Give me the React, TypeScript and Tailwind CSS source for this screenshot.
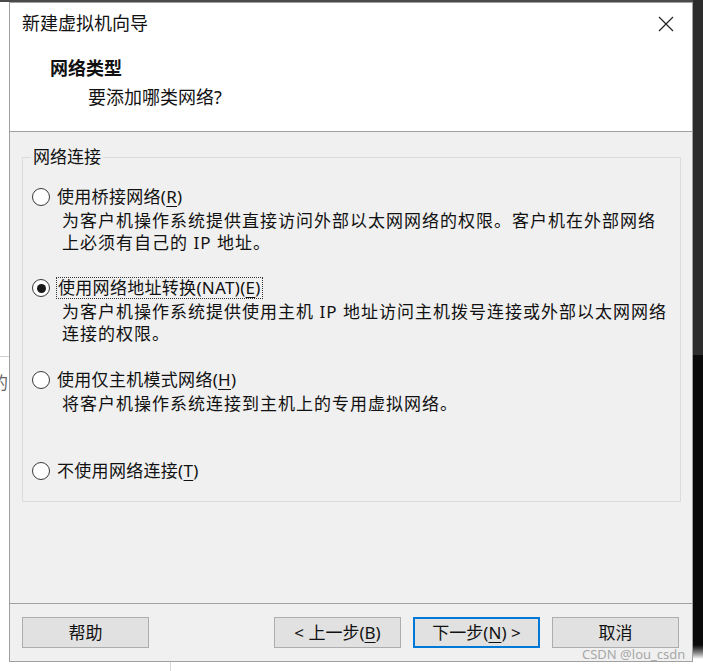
const sans = "font-['Noto_Sans','Noto_Sans_CJK_SC',sans-serif]";

function Radio({ checked }: { checked?: boolean }) {
  return (
    <span className="flex h-[18px] w-[18px] shrink-0 items-center justify-center rounded-full border-[1.5px] border-[#3a3a3a] bg-white">
      {checked ? <span className="h-[9px] w-[9px] rounded-full bg-[#1a1a1a]" /> : null}
    </span>
  );
}

function Key({ k }: { k: string }) {
  return <span className="underline underline-offset-[3px] decoration-1">{k}</span>;
}

function Option({
  label,
  desc,
  checked,
  focused,
}: {
  label: React.ReactNode;
  desc?: string[];
  checked?: boolean;
  focused?: boolean;
}) {
  return (
    <div>
      <div className="flex h-[22px] items-center pl-[9px]">
        <Radio checked={checked} />
        <span
          className={
            focused
              ? "ml-[6px] border border-dotted border-[#333333] px-[1px] text-[17px] leading-[20px] tracking-[0.3px]"
              : "ml-[7px] text-[17px] leading-[22px] tracking-[0.3px]"
          }
        >
          {label}
        </span>
      </div>
      {desc ? (
        <div className="mt-[2px] pl-[39px] text-[17px] leading-[22px] tracking-[1px] text-[#111111]">
          {desc.map((d) => (
            <div key={d}>{d}</div>
          ))}
        </div>
      ) : null}
    </div>
  );
}

function Btn({ children, primary }: { children: React.ReactNode; primary?: boolean }) {
  return (
    <div
      className={
        primary
          ? "flex h-[31px] w-[127px] items-center justify-center border-2 border-[#0078d7] bg-[#e1e1e1] text-[17px]"
          : "flex h-[31px] w-[127px] items-center justify-center border border-[#adadad] bg-[#e1e1e1] text-[17px]"
      }
    >
      {children}
    </div>
  );
}

export default function App() {
  return (
    <div className={`relative flex h-[671px] w-[703px] overflow-hidden bg-white text-[#111111] ${sans}`}>
      {/* page behind the dialog, left edge */}
      <div className="w-[9px] shrink-0 overflow-hidden">
        <div className="h-[2px] bg-[#4a4a4a]" />
        <div className="mt-[354px] h-px bg-[#d0d0d0]" />
        <div className="mt-[15px] -ml-[9px] whitespace-nowrap text-[17px] leading-[22px] text-[#666666]">的</div>
      </div>

      <div className="flex w-[684px] shrink-0 flex-col">
        <div className="h-[2px] bg-[#4a4a4a]" />
        <div className="flex h-[660px] flex-col border border-[#a0a0a0] bg-[#f0f0f0]">
          {/* title + header */}
          <div className="h-[128px] bg-white">
            <div className="flex h-[40px] items-center justify-between pl-[12px] pr-[18px]">
              <span className="text-[18px] leading-[24px]">新建虚拟机向导</span>
              <svg width="16" height="16" viewBox="0 0 16 16" className="mt-[1px]">
                <path d="M1 1 L15 15 M15 1 L1 15" stroke="#222" strokeWidth="1.2" />
              </svg>
            </div>
            <div className="mt-[13px] pl-[40px] text-[18px] font-bold leading-[24px]">网络类型</div>
            <div className="mt-[5px] pl-[78px] text-[18px] leading-[24px]">要添加哪类网络?</div>
          </div>
          <div className="h-px bg-[#a0a0a0]" />

          {/* body */}
          <div className="h-[471px] pl-[12px]">
            <fieldset className="mt-[14px] w-[659px] border border-[#dcdcdc] pb-[19px]">
              <legend className="ml-[8px] px-[2px] text-[17px] leading-[22px]">网络连接</legend>
              <div className="mt-[18px]">
                <Option
                  label={
                    <>
                      使用桥接网络(<Key k="R" />)
                    </>
                  }
                  desc={[
                    "为客户机操作系统提供直接访问外部以太网网络的权限。客户机在外部网络",
                    "上必须有自己的 IP 地址。",
                  ]}
                />
              </div>
              <div className="mt-[23px]">
                <Option
                  checked
                  focused
                  label={
                    <>
                      使用网络地址转换(NAT)(<Key k="E" />)
                    </>
                  }
                  desc={[
                    "为客户机操作系统提供使用主机 IP 地址访问主机拨号连接或外部以太网网络",
                    "连接的权限。",
                  ]}
                />
              </div>
              <div className="mt-[24px]">
                <Option
                  label={
                    <>
                      使用仅主机模式网络(<Key k="H" />)
                    </>
                  }
                  desc={["将客户机操作系统连接到主机上的专用虚拟网络。"]}
                />
              </div>
              <div className="mt-[45px]">
                <Option
                  label={
                    <>
                      不使用网络连接(<Key k="T" />)
                    </>
                  }
                />
              </div>
            </fieldset>
          </div>
          <div className="h-px bg-[#a0a0a0]" />

          {/* footer */}
          <div className="flex flex-1 items-start pl-[12px] pr-[13px] pt-[13px]">
            <Btn>帮助</Btn>
            <div className="ml-auto flex gap-[12px]">
              <Btn>
                &lt; 上一步(<Key k="B" />)
              </Btn>
              <Btn primary>
                下一步(<Key k="N" />) &gt;
              </Btn>
              <Btn>取消</Btn>
            </div>
          </div>
        </div>
        <div className="flex-1 pl-[161px]">
          <div className="h-full w-px bg-[#d8d8d8]" />
        </div>
      </div>

      {/* dark desktop on the right */}
      <div className="flex w-[10px] shrink-0 flex-col">
        <div className="h-[355px] bg-[#2c2c2c]" />
        <div className="h-[290px] bg-[#0a0a0a]" />
        <div className="h-[14px] bg-gradient-to-b from-[#0a0a0a] to-[#ffffff]" />
        <div className="flex-1 bg-white" />
      </div>

      <div className="absolute left-[582px] top-[645px] text-[13px] leading-[18px] text-[#a8a8a8]">CSDN @lou_csdn</div>
    </div>
  );
}
